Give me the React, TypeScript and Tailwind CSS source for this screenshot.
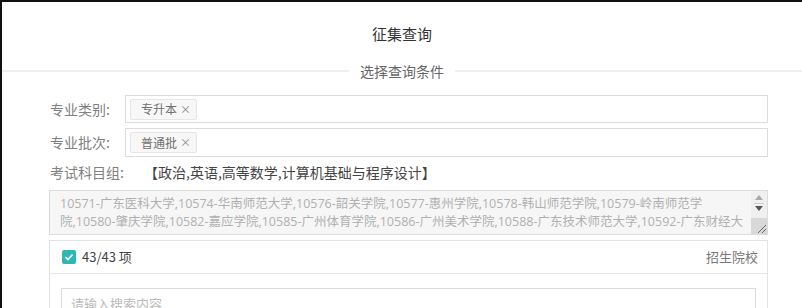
import React from "react";

const font = { fontFamily: '"Open Sans", "Noto Sans CJK SC", sans-serif' };

function Tag({ text }: { text: string }) {
  return (
    <span className="ml-[4px] flex h-[21px] items-center rounded-[2px] border border-[#e6e6e6] bg-[#f7f7f7] pl-[10px] pr-[5px] text-[12px] text-[#707070]">
      {text}
      <span className="ml-[3px] text-[11px] text-[#888]">×</span>
    </span>
  );
}

export default function App() {
  const schools =
    "10571-广东医科大学,10574-华南师范大学,10576-韶关学院,10577-惠州学院,10578-韩山师范学院,10579-岭南师范学院,10580-肇庆学院,10582-嘉应学院,10585-广州体育学院,10586-广州美术学院,10588-广东技术师范大学,10592-广东财经大学,10594-广东白云学院";
  return (
    <div
      className="h-[308px] w-[802px] overflow-hidden border-l-[2px] border-t-[2px] border-[#111] bg-white"
      style={{ fontFamily: '"Noto Sans CJK SC", "Open Sans", sans-serif' }}
    >
      <div className="flex h-[62px] items-center justify-center pt-[2px] text-[15px] text-[#333]">征集查询</div>
      <div className="flex items-center">
        <div className="h-[2px] flex-1 bg-[#efefef]" />
        <div className="px-[11px] text-[14px] leading-[14px] text-[#666]">选择查询条件</div>
        <div className="h-[2px] flex-1 bg-[#efefef]" />
      </div>
      <div className="pl-[47px] pr-[34px] pt-[17px]">
        <div className="flex h-[28px] items-center">
          <div className="w-[76px] pl-[1px] text-[14px] text-[#808080]">专业类别:</div>
          <div className="flex h-[28px] flex-1 items-center border border-[#dcdcdc]">
            <Tag text="专升本" />
          </div>
        </div>
        <div className="mt-[5px] flex h-[29px] items-center">
          <div className="w-[76px] pl-[1px] text-[14px] text-[#808080]">专业批次:</div>
          <div className="flex h-[29px] flex-1 items-center border border-[#dcdcdc]">
            <Tag text="普通批" />
          </div>
        </div>
        <div className="mt-[4px] flex h-[22px] items-center text-[14px]">
          <div className="w-[95px] pl-[1px] text-[#808080]">考试科目组:</div>
          <div className="text-[#444]">【政治,英语,高等数学,计算机基础与程序设计】</div>
        </div>
        <div className="mt-[7px] flex h-[45px] border border-[#dcdcdc] bg-[#f6f6f6]">
          <div className="flex-1 pl-[10px] pr-[6px] pt-[4px]">
            <div
              className="h-[36px] overflow-hidden text-[12.5px] leading-[18px] text-[#b0b0b0]"
              style={font}
            >
              {schools}
            </div>
          </div>
          <div className="flex w-[16px] flex-col items-center bg-[#f0f0f0]">
            <div className="mt-[4px] h-0 w-0 border-x-[4px] border-b-[5px] border-x-transparent border-b-[#aaa]" />
            <div className="mt-[3px] h-px w-[10px] bg-[#ccc]" />
            <div className="mt-[2px] h-0 w-0 border-x-[4px] border-t-[5px] border-x-transparent border-t-[#555]" />
            <div className="mt-auto flex h-[16px] w-[16px] items-end justify-end bg-[#d8d8d8]">
              <svg width="12" height="12" viewBox="0 0 12 12">
                <path d="M3 11 L11 3 M7 11 L11 7" stroke="#666" strokeWidth="1" />
              </svg>
            </div>
          </div>
        </div>
        <div className="mt-[5px] border border-[#e3e3e3]">
          <div className="flex h-[33px] items-center border-b border-[#e6e6e6] pl-[12px] pr-[9px]">
            <div className="flex h-[14px] w-[14px] items-center justify-center rounded-[2px] bg-[#2fb7b3]">
              <svg width="10" height="10" viewBox="0 0 10 10">
                <path d="M1.5 5 L4 7.5 L8.5 2.5" stroke="white" strokeWidth="1.6" fill="none" />
              </svg>
            </div>
            <span className="ml-[6px] text-[13px] text-[#444]">43/43 项</span>
            <span className="ml-auto text-[13px] text-[#777]">招生院校</span>
          </div>
          <div className="px-[11px] pt-[14px]">
            <div className="flex h-[32px] items-center border border-[#dcdcdc] pl-[9px] text-[13px] text-[#bbb]">
              请输入搜索内容
            </div>
          </div>
        </div>
      </div>
    </div>
  );
}
